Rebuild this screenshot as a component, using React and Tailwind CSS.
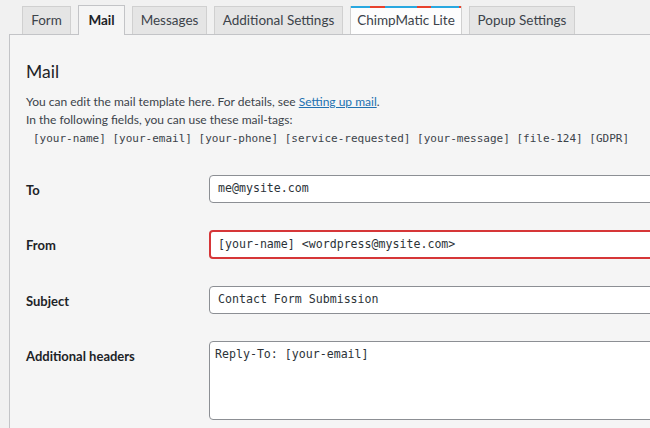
import React from "react";

const tabs = [
  { label: "Form", w: "w-[49px]" },
  { label: "Mail", w: "w-[47px]", active: true },
  { label: "Messages", w: "w-[75px]" },
  { label: "Additional Settings", w: "w-[129px]" },
  { label: "ChimpMatic Lite", w: "w-[112px]", chimp: true },
  { label: "Popup Settings", w: "w-[106px]" },
];

const mailTags =
  "[your-name] [your-email] [your-phone] [service-requested] [your-message] [file-124] [GDPR]";

function Tab({ tab }) {
  if (tab.active) {
    return (
      <div
        className={`${tab.w} h-[30px] -mb-px flex items-center justify-center border border-b-0 border-[#c3c4c7] bg-[#f5f5f5] text-[13.5px] font-bold text-[#1d2327]`}
      >
        {tab.label}
      </div>
    );
  }
  return (
    <div
      className={`${tab.w} h-[28px] relative flex items-center justify-center border border-b-0 border-[#d0d0d0] ${
        tab.chimp ? "bg-[#fdfdfd]" : "bg-[#e5e5e5]"
      } text-[13.5px] text-[#3c434a]`}
    >
      {tab.chimp && (
        // striped accent bar on top of the ChimpMatic tab
        <div className="absolute -top-px left-0 right-0 h-[2px] flex">
          <div className="w-[19px] bg-[#29a8e0]" />
          <div className="w-[15px] bg-[#e8412c]" />
          <div className="w-[32px] bg-[#29a8e0]" />
          <div className="w-[14px] bg-[#e8412c]" />
          <div className="w-[28px] bg-[#29a8e0]" />
          <div className="flex-1 bg-[#e8412c]" />
        </div>
      )}
      {tab.label}
    </div>
  );
}

function Row({ label, children, top = false }) {
  return (
    <div className={`flex ${top ? "items-start" : "items-center"}`}>
      <div
        className={`w-[183px] shrink-0 text-[13px] font-bold text-[#1d2327] ${
          top ? "pt-[6px]" : "pt-[3px]"
        }`}
      >
        {label}
      </div>
      {children}
    </div>
  );
}

export default function App() {
  const mono = "font-['DejaVu_Sans_Mono','Liberation_Mono',monospace]";
  return (
    <div className="w-[650px] h-[428px] overflow-hidden bg-[#f1f1f1] pt-[5px] font-['Lato','Noto_Sans',sans-serif] text-[#3c434a]">
      <div className="flex items-end gap-[7px] pl-[22px]">
        {tabs.map((t) => (
          <Tab key={t.label} tab={t} />
        ))}
      </div>
      <div className="ml-[9px] w-[700px] h-[400px] border-l border-t border-[#c3c4c7] bg-[#f5f5f5] pl-[16px] pt-[24px]">
        <h2 className="text-[17.5px] leading-[26px] text-[#1d2327]">Mail</h2>
        <div className="mt-[8px] text-[12px] leading-[18px]">
          <p>
            You can edit the mail template here. For details, see{" "}
            <a className="text-[#2271b1] underline">Setting up mail</a>.
          </p>
          <p>In the following fields, you can use these mail-tags:</p>
          <p className={`${mono} text-[11px] pl-[7px] pt-[1px] text-[#3c434a]`}>{mailTags}</p>
        </div>

        <div className="mt-[27px] flex flex-col gap-[27px]">
          <Row label="To">
            <div
              className={`w-[470px] h-[28px] flex items-center px-[8px] bg-white border border-[#8c8f94] rounded-[4px] ${mono} text-[11.6px] text-[#2c3338]`}
            >
              me@mysite.com
            </div>
          </Row>
          <Row label="From">
            <div
              className={`w-[470px] h-[29px] flex items-center px-[7px] bg-white border-2 border-[#d63638] rounded-[4px] ${mono} text-[11.6px] text-[#2c3338]`}
            >
              {"[your-name] <wordpress@mysite.com>"}
            </div>
          </Row>
          <Row label="Subject">
            <div
              className={`w-[470px] h-[28px] flex items-center px-[8px] bg-white border border-[#8c8f94] rounded-[4px] ${mono} text-[11.6px] text-[#2c3338]`}
            >
              Contact Form Submission
            </div>
          </Row>
          <Row label="Additional headers" top>
            <div
              className={`w-[470px] h-[79px] px-[5px] pt-[4px] bg-white border border-[#8c8f94] rounded-[4px] ${mono} text-[11.6px] text-[#2c3338]`}
            >
              Reply-To: [your-email]
            </div>
          </Row>
        </div>
      </div>
    </div>
  );
}
